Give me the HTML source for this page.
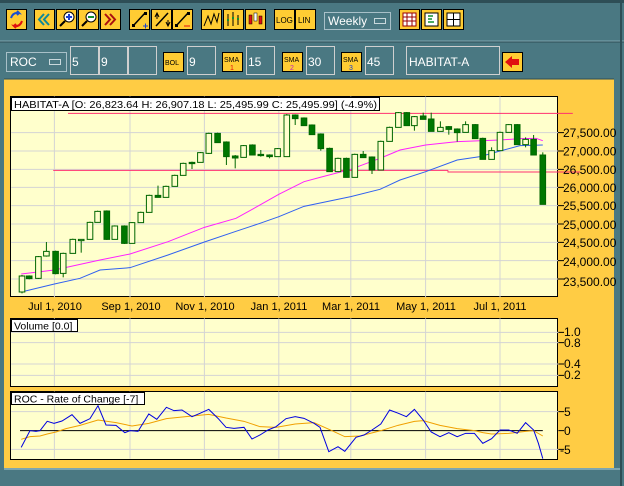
<!DOCTYPE html>
<html><head><meta charset="utf-8"><style>
html,body{margin:0;padding:0;width:624px;height:486px;overflow:hidden;background:#4a7882;font-family:"Liberation Sans","DejaVu Sans",sans-serif}
svg text{font-family:"Liberation Sans","DejaVu Sans",sans-serif}
</style></head><body>
<svg width="624" height="486" viewBox="0 0 624 486" xmlns="http://www.w3.org/2000/svg">
<rect x="0" y="0" width="624" height="486" fill="#4a7882"/>
<rect x="0" y="0" width="624" height="3" fill="#2e4e56"/>
<line x1="0" y1="41" x2="624" y2="41" stroke="#7ea6b0" stroke-width="1"/>
<line x1="0" y1="42" x2="624" y2="42" stroke="#2e4e56" stroke-width="1"/>
<line x1="621" y1="3" x2="621" y2="486" stroke="#2e4e56" stroke-width="2"/>

<g stroke="#000" stroke-width="1" fill="#ffcc33">
<rect x="6.5" y="9.5" width="20" height="20"/>
<rect x="34.5" y="9.5" width="20" height="20"/><rect x="56.5" y="9.5" width="20" height="20"/><rect x="78.5" y="9.5" width="20" height="20"/><rect x="100.5" y="9.5" width="20" height="20"/>
<rect x="129.5" y="9.5" width="20" height="20"/><rect x="151.5" y="9.5" width="20" height="20"/><rect x="172.5" y="9.5" width="20" height="20"/>
<rect x="201.5" y="9.5" width="20" height="20"/><rect x="223.5" y="9.5" width="20" height="20"/><rect x="245.5" y="9.5" width="20" height="20"/>
<rect x="274.5" y="9.5" width="20" height="20"/><rect x="295.5" y="9.5" width="20" height="20"/>
<rect x="399.5" y="9.5" width="20" height="20"/><rect x="421.5" y="9.5" width="20" height="20"/><rect x="443.5" y="9.5" width="20" height="20"/>
</g>
<path d="M11 18 Q13 12 19 13 L17 11 M19 13 L17 15" stroke="#1a4fd0" stroke-width="2" fill="none"/>
<path d="M22 21 Q20 27 14 26 L16 28 M14 26 L16 24" stroke="#e01010" stroke-width="2" fill="none"/>
<path d="M44 14 l-5 5.5 5 5.5 M49 14 l-5 5.5 5 5.5" stroke="#108898" stroke-width="2" fill="none"/>
<path d="M105 14 l5 5.5 -5 5.5 M110 14 l5 5.5 -5 5.5" stroke="#aa1010" stroke-width="2" fill="none"/>
<circle cx="69" cy="17" r="5" fill="#fff" stroke="#000"/><line x1="65" y1="21" x2="60" y2="26" stroke="#000" stroke-width="2"/><path d="M66 17h6M69 14v6" stroke="#1a3fd0" stroke-width="2"/>
<circle cx="91" cy="17" r="5" fill="#fff" stroke="#000"/><line x1="87" y1="21" x2="82" y2="26" stroke="#000" stroke-width="2"/><path d="M88 17h6" stroke="#109030" stroke-width="2"/>
<path d="M133 26 L145 13" stroke="#000" stroke-width="1.5"/><rect x="132" y="24" width="3" height="3"/><rect x="144" y="12" width="3" height="3"/><path d="M143 26h5M145.5 23.5v5" stroke="#1a3fd0"/>
<path d="M156 26 L168 13" stroke="#000" stroke-width="1.5"/><path d="M155 17 l2-4 2 4M157 13v6M166 22l2 4 2-4M168 20v6" stroke="#000" fill="none"/>
<path d="M176 26 L188 13" stroke="#000" stroke-width="1.5"/><rect x="175" y="24" width="3" height="3"/><rect x="187" y="12" width="3" height="3"/><path d="M184 26h6" stroke="#e01010"/>
<path d="M204 26 L208 16 L211 24 L214 14 L217 22 L219 13" stroke="#000" fill="none"/>
<path d="M228 14v12M233 12v14M238 15v10" stroke="#000"/><path d="M227 20h2M232 18h2M237 19h2" stroke="#109030" stroke-width="2"/>
<rect x="249" y="15" width="3" height="9" fill="#e01010" stroke="#000" stroke-width="0.5"/><rect x="254" y="13" width="3" height="8" fill="#fff" stroke="#000" stroke-width="0.5"/><rect x="259" y="16" width="3" height="8" fill="#e01010" stroke="#000" stroke-width="0.5"/>
<text x="276" y="23" font-size="8" fill="#000">LOG</text>
<text x="298" y="23" font-size="8" fill="#000">LIN</text>
<rect x="324.5" y="12.5" width="66" height="17" fill="#4a7882" stroke="#a8c0c8"/>
<text x="328" y="25" font-size="12" fill="#fff">Weekly</text>
<rect x="374.5" y="18.5" width="11" height="5" fill="#4a7882" stroke="#c8d8dc"/>
<rect x="403" y="13" width="13" height="13" fill="#fff" stroke="#900"/><path d="M407 13v13M412 13v13M403 17h13M403 21h13" stroke="#900"/>
<rect x="425" y="13" width="13" height="13" fill="#fff" stroke="#000"/><path d="M428 16h5M428 19h4M428 22h6" stroke="#109030" stroke-width="1.5"/>
<rect x="447" y="13" width="13" height="13" fill="#fff" stroke="#000"/><path d="M453.5 13v13M447 19.5h13" stroke="#000"/>

<rect x="6.5" y="52.5" width="60" height="19" fill="#4a7882" stroke="#a8c0c8"/>
<text x="10" y="66" font-size="12" fill="#fff">ROC</text>
<rect x="49.5" y="59.5" width="11" height="5" fill="#4a7882" stroke="#c8d8dc"/>
<g fill="#4a7882" stroke="#d0d0d0">
<rect x="70.5" y="46.5" width="28" height="28"/><rect x="99.5" y="46.5" width="28" height="28"/><rect x="128.5" y="46.5" width="28" height="28"/>
<rect x="187.5" y="46.5" width="28" height="28"/><rect x="246.5" y="46.5" width="28" height="28"/><rect x="306.5" y="46.5" width="28" height="28"/><rect x="365.5" y="46.5" width="28" height="28"/>
<rect x="406.5" y="46.5" width="93" height="28"/>
</g>
<g font-size="12" fill="#fff">
<text x="72" y="66">5</text><text x="101" y="66">9</text><text x="189" y="66">9</text><text x="248" y="66">15</text><text x="308" y="66">30</text><text x="367" y="66">45</text><text x="409" y="66">HABITAT-A</text>
</g>
<g stroke="#000" fill="#ffcc33">
<rect x="163.5" y="52.5" width="20" height="19"/><rect x="222.5" y="52.5" width="20" height="19"/><rect x="282.5" y="52.5" width="20" height="19"/><rect x="341.5" y="52.5" width="20" height="19"/><rect x="502.5" y="52.5" width="20" height="19"/>
</g>
<g font-size="7" fill="#000"><text x="165" y="65">BOL</text><text x="224" y="62">SMA</text><text x="284" y="62">SMA</text><text x="343" y="62">SMA</text></g>
<g font-size="7"><text x="230" y="70" fill="#e01010">1</text><text x="290" y="70" fill="#c020c0">2</text><text x="349" y="70" fill="#1a3fd0">3</text></g>
<path d="M505 62 L512 56 V59 H519 V65 H512 V68 Z" fill="#e01010"/>

<rect x="4" y="79" width="610" height="389" fill="#ffcc44"/>
<line x1="4" y1="79" x2="614" y2="79" stroke="#2e4e56"/>
<rect x="4" y="468" width="616" height="2" fill="#7ea6b0"/>
<rect x="10.5" y="96.5" width="547" height="200" fill="#ffffcc" stroke="#000"/>
<rect x="10.5" y="318.5" width="547" height="68" fill="#ffffcc" stroke="#000"/>
<rect x="10.5" y="391.5" width="547" height="68" fill="#ffffcc" stroke="#000"/>

<g transform="translate(0,90) scale(0.4,0.33333)" fill="none">
<path vector-effect="non-scaling-stroke" stroke="#d4d4d4" d="M136 20V622M325 20V622M511 20V622M697 20V622M877 20V622M1064 20V622M1250 20V622M28 128H1395M28 183H1395M28 238H1395M28 292H1395M28 347H1395M28 402H1395M28 457H1395M28 512H1395M28 567H1395"/>
<path vector-effect="non-scaling-stroke" stroke="#000" d="M1395 128H1410M1395 183H1410M1395 238H1410M1395 292H1410M1395 347H1410M1395 402H1410M1395 457H1410M1395 512H1410M1395 567H1410"/>
<path vector-effect="non-scaling-stroke" stroke="#ff3070" d="M170 70H1432M133 241H1120M1120 241V246H1450"/>
<polyline vector-effect="non-scaling-stroke" stroke="#ff20ff" points="53,552 136,540 250,510 325,492 420,455 511,412 590,385 650,345 697,313 760,275 800,262 877,238 950,205 1000,180 1064,165 1143,155 1250,150 1300,146 1340,145 1357,152"/>
<polyline vector-effect="non-scaling-stroke" stroke="#3060f0" points="53,606 136,582 200,565 250,540 325,533 420,495 511,456 590,424 650,400 697,380 760,349 877,320 950,298 1000,270 1064,245 1143,210 1200,200 1250,183 1300,167 1357,165"/>
<g id="candles" stroke="#006600"></g>
</g>

<rect x="11.5" y="97.5" width="368" height="13" fill="#fff" stroke="#000"/>
<text x="14" y="108" font-size="10.5" fill="#000" textLength="363" lengthAdjust="spacingAndGlyphs">HABITAT-A [O: 26,823.64  H: 26,907.18  L: 25,495.99  C: 25,495.99] (-4.9%)</text>
<g font-size="12" fill="#000">
<text x="563" y="137">27,500.00</text><text x="563" y="155.5">27,000.00</text><text x="563" y="174">26,500.00</text><text x="563" y="192">26,000.00</text><text x="563" y="210">25,500.00</text><text x="563" y="229">25,000.00</text><text x="563" y="247">24,500.00</text><text x="563" y="266">24,000.00</text><text x="563" y="286">23,500.00</text>
</g>
<g font-size="11" fill="#000" text-anchor="middle">
<text x="55" y="310">Jul 1, 2010</text><text x="131" y="310">Sep 1, 2010</text><text x="205" y="310">Nov 1, 2010</text><text x="279" y="310">Jan 1, 2011</text><text x="351" y="310">Mar 1, 2011</text><text x="426" y="310">May 1, 2011</text><text x="500" y="310">Jul 1, 2011</text>
</g>

<g transform="translate(0,310) scale(0.4,0.33333)">
<path vector-effect="non-scaling-stroke" stroke="#d4d4d4" d="M136 25V228M325 25V228M511 25V228M697 25V228M877 25V228M1064 25V228M1250 25V228M28 67H1396M28 98H1396M28 162H1396M28 196H1396M28 305H1396M28 418H1396M136 245V446M325 245V446M511 245V446M697 245V446M877 245V446M1064 245V446M1250 245V446"/>
<path vector-effect="non-scaling-stroke" stroke="#000" d="M1396 67H1410M1396 98H1410M1396 162H1410M1396 196H1410M1396 305H1410M1396 362H1410M1396 418H1410M50 362H1357"/>
<polyline vector-effect="non-scaling-stroke" fill="none" stroke="#f0a000" points="53,388 75,380 100,378 118,372 140,366 165,356 200,346 245,330 290,338 330,348 372,340 416,326 480,318 522,313 565,324 610,334 650,350 690,352 738,342 785,338 830,362 862,380 900,378 952,362 995,346 1036,334 1058,332 1100,346 1143,356 1186,362 1207,368 1229,372 1272,370 1314,364 1334,362 1357,378"/>
<polyline vector-effect="non-scaling-stroke" fill="none" stroke="#0000e0" points="53,412 75,362 90,364 100,362 118,334 135,340 155,333 180,314 200,340 225,326 245,287 265,345 290,346 312,368 325,362 345,364 372,312 392,328 416,292 435,302 455,300 480,320 500,310 522,298 545,325 565,352 585,355 610,352 630,387 650,375 670,360 690,350 715,326 738,320 760,325 785,340 800,352 822,425 845,410 862,424 890,382 910,375 930,360 952,342 974,300 996,310 1016,320 1036,298 1058,330 1078,366 1100,380 1122,368 1143,380 1164,370 1186,370 1207,400 1229,386 1250,360 1272,360 1293,370 1314,338 1334,360 1346,400 1357,446"/>
</g>
<rect x="11.5" y="319.5" width="66" height="12" fill="#fff" stroke="#000"/>
<text x="14" y="329.5" font-size="10.5">Volume [0.0]</text>
<rect x="11.5" y="392.5" width="133" height="12" fill="#fff" stroke="#000"/>
<text x="14" y="402.5" font-size="10.5">ROC - Rate of Change [-7]</text>
<g font-size="12" fill="#000">
<text x="564" y="336">1.0</text><text x="564" y="347">0.8</text><text x="564" y="368">0.4</text><text x="564" y="379">0.2</text>
<text x="564" y="416">5</text><text x="564" y="435">0</text><text x="560" y="454">-5</text>
</g>
</svg>
<script>
var C=[[55,558,606,555,610,0],[73,558,566,556,568,1],[96,500,565,498,567,0],[116,484,498,456,500,0],[139,484,551,482,553,1],[158,490,550,488,562,0],[182,448,490,446,490,0],[203,448,452,448,488,0],[225,397,448,395,448,0],[244,364,397,362,397,0],[267,363,448,361,450,1],[287,408,448,406,448,0],[311,408,460,406,462,1],[330,398,460,396,460,0],[352,367,398,365,398,0],[373,316,367,314,367,0],[395,316,322,287,322,1],[415,289,322,287,322,0],[437,256,289,254,289,0],[458,220,256,218,256,0],[480,217,221,215,237,1],[501,188,217,186,217,0],[522,130,190,128,192,0],[544,130,158,128,158,1],[566,156,200,154,225,1],[588,198,204,195,235,1],[609,167,202,165,202,0],[631,165,195,163,195,1],[652,193,197,180,200,1],[674,195,200,193,205,1],[694,176,200,174,200,0],[717,75,200,72,200,0],[738,75,86,73,105,1],[760,84,107,82,107,1],[780,105,134,103,134,1],[802,132,176,130,182,1],[824,175,245,173,245,1],[845,205,245,203,245,0],[866,205,262,203,262,1],[887,193,262,191,262,0],[908,193,203,183,203,1],[930,201,240,199,252,1],[952,154,240,152,240,0],[974,112,154,110,154,0],[996,68,112,66,112,0],[1017,68,107,66,107,1],[1036,80,107,78,122,0],[1058,78,88,68,88,1],[1078,87,124,68,124,1],[1101,112,124,94,124,0],[1122,110,118,108,134,1],[1143,117,128,115,155,1],[1164,104,127,94,127,0],[1188,104,146,102,146,1],[1207,145,208,143,208,1],[1229,182,208,172,208,0],[1250,127,182,125,182,0],[1272,104,127,102,127,0],[1293,104,164,102,164,1],[1314,148,164,142,172,0],[1334,148,195,135,195,1],[1357,195,343,187,343,1]];
var g=document.getElementById('candles'),h='';
C.forEach(function(c){h+='<line vector-effect="non-scaling-stroke" x1="'+c[0]+'" x2="'+c[0]+'" y1="'+c[3]+'" y2="'+c[4]+'"/>';
h+='<rect vector-effect="non-scaling-stroke" x="'+(c[0]-7)+'" y="'+c[1]+'" width="14" height="'+Math.max(c[2]-c[1],3)+'" fill="'+(c[5]?'#007700':'#ffffcc')+'"/>';});
g.innerHTML=h;
</script>
</body></html>
